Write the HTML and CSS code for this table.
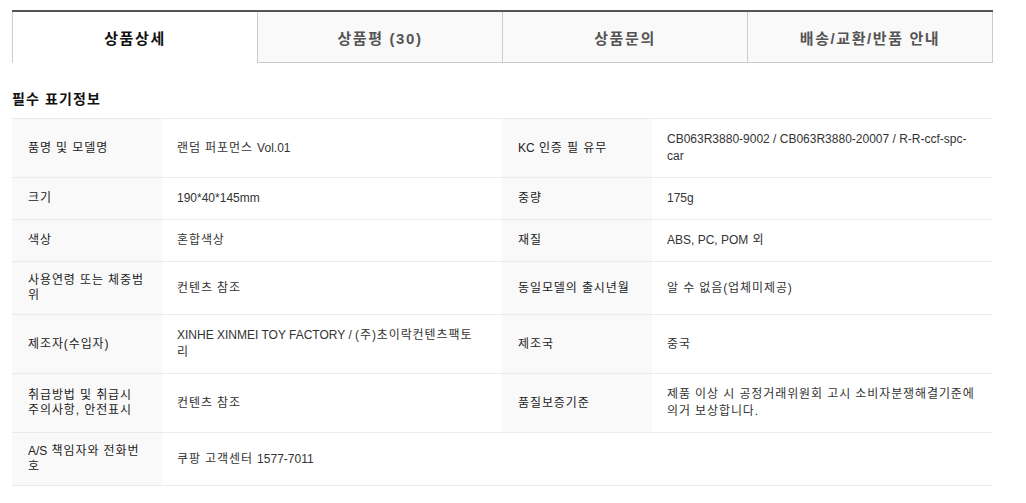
FILE: index.html
```html
<!DOCTYPE html>
<html lang="ko">
<head>
<meta charset="utf-8">
<title>상품상세</title>
<link rel="stylesheet" href="styles.css">
</head>
<body>
<div class="page">
  <ul class="tabs">
    <li class="tab active">상품상세</li>
    <li class="tab">상품평 (30)</li>
    <li class="tab">상품문의</li>
    <li class="tab last">배송/교환/반품 안내</li>
  </ul>
  <h3 class="section-title">필수 표기정보</h3>
  <table class="spec">
    <colgroup>
      <col class="c-label"><col class="c-value"><col class="c-label"><col class="c-value">
    </colgroup>
    <tbody>
      <tr>
        <th>품명 및 모델명</th><td>랜덤 퍼포먼스 <span class="en">Vol.01</span></td>
        <th><span class="en">KC</span> 인증 필 유무</th><td><span class="en">CB063R3880-9002 / CB063R3880-20007 / R-R-ccf-spc-<br>car</span></td>
      </tr>
      <tr>
        <th>크기</th><td><span class="en">190*40*145mm</span></td>
        <th>중량</th><td><span class="en">175g</span></td>
      </tr>
      <tr>
        <th>색상</th><td>혼합색상</td>
        <th>재질</th><td><span class="en">ABS, PC, POM</span> 외</td>
      </tr>
      <tr>
        <th>사용연령 또는 체중범<br>위</th><td>컨텐츠 참조</td>
        <th>동일모델의 출시년월</th><td>알 수 없음(업체미제공)</td>
      </tr>
      <tr>
        <th>제조자(수입자)</th><td><span class="en">XINHE XINMEI TOY FACTORY / </span>(주)초이락컨텐츠팩토<br>리</td>
        <th>제조국</th><td>중국</td>
      </tr>
      <tr>
        <th>취급방법 및 취급시<br>주의사항, 안전표시</th><td>컨텐츠 참조</td>
        <th>품질보증기준</th><td>제품 이상 시 공정거래위원회 고시 소비자분쟁해결기준에<br>의거 보상합니다.</td>
      </tr>
      <tr>
        <th><span class="en">A/S</span> 책임자와 전화번<br>호</th><td>쿠팡 고객센터 <span class="en">1577-7011</span></td>
        <td class="empty"></td><td class="empty"></td>
      </tr>
    </tbody>
  </table>
</div>
</body>
</html>
```

FILE: styles.css
```css
* { box-sizing: border-box; }
html, body { margin: 0; padding: 0; background: #fff; }
body {
  font-family: "Liberation Sans", "Noto Sans CJK KR", sans-serif;
  font-size: 12px;
  color: #333;
}
.page {
  width: 981px;
  margin-left: 12px;
  padding-top: 10px;
}
.tabs {
  list-style: none;
  margin: 0;
  padding: 0;
  display: flex;
  border-top: 2px solid #555;
}
.tab {
  flex: 1 1 0;
  height: 51px;
  display: flex;
  align-items: center;
  justify-content: center;
  font-size: 15px;
  font-weight: 700;
  letter-spacing: 1.6px;
  color: #555;
  background: #f9f9f9;
  border-left: 1px solid #ccc;
  border-bottom: 1px solid #ccc;
  padding-top: 1px;
}
.tab.last { border-right: 1px solid #ccc; }
.tab.active {
  background: #fff;
  color: #111;
  border-bottom-color: #fff;
}
.section-title {
  margin: 0;
  padding-top: 28px;
  height: 55px;
  font-size: 14px;
  font-weight: 700;
  letter-spacing: 1.1px;
  color: #111;
  line-height: 16px;
}
.spec {
  width: 980px;
  border-collapse: collapse;
  table-layout: fixed;
  border-top: 1px solid #ebebeb;
  letter-spacing: 0.9px;
}
.spec .en { letter-spacing: 0; }
.c-label { width: 150px; }
.c-value { width: 340px; }
.spec tr { border-bottom: 1px solid #ebebeb; }
.spec th {
  background: #f9f9f9;
  font-weight: 400;
  text-align: left;
  vertical-align: middle;
  padding: 11px 4px 11px 16px;
  line-height: 15px;
  color: #222;
  white-space: nowrap;
}
.spec td {
  vertical-align: middle;
  padding: 12px 4px 12px 15px;
  line-height: 17px;
  color: #333;
  white-space: nowrap;
}
.spec td.empty { background: #fff; }
```
